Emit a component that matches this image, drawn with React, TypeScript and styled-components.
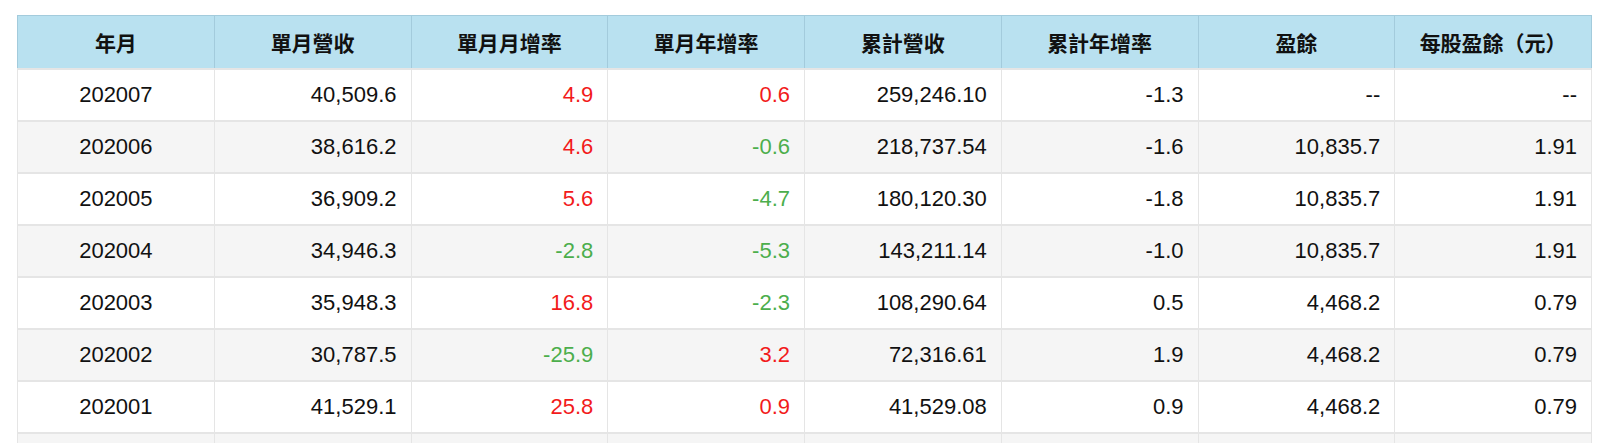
import React from 'react';
import styled, { createGlobalStyle } from 'styled-components';

const GlobalStyle = createGlobalStyle`
	body {
		margin: 0;
		background: #fff;
		font-family: 'Liberation Sans', Arial, 'Noto Sans CJK TC', sans-serif;
	}
`;

const Wrap = styled.div`
	padding: 15px 8px 0 17px;
`;

const Table = styled.table`
	width: 100%;
	border-collapse: collapse;
	table-layout: fixed;
	font-size: 22px;
	color: #111;
`;

const Th = styled.th`
	height: 52px;
	padding: 0 14px;
	background: #b9e1f0;
	border: 1px solid #a3cbdc;
	font-size: 21px;
	font-weight: bold;
	text-align: center;
	color: #111;
`;

const Row = styled.tr<{ $alt: boolean }>`
	background: ${(p) => (p.$alt ? '#f5f5f5' : '#fff')};
`;

type Tone = 'up' | 'down' | 'plain';

const Td = styled.td<{ $center?: boolean; $tone?: Tone }>`
	height: 50px;
	padding: 0 14px;
	border: 1px solid #e5e5e5;
	border-top: 2px solid #e5e5e5;
	text-align: ${(p) => (p.$center ? 'center' : 'right')};
	color: ${(p) => (p.$tone === 'up' ? '#f21b1b' : p.$tone === 'down' ? '#4cae4c' : '#111')};
	white-space: nowrap;
`;

const headers = ['年月', '單月營收', '單月月增率', '單月年增率', '累計營收', '累計年增率', '盈餘', '每股盈餘（元）'];

type Rec = [string, string, string, string, string, string, string, string];

const rows: Rec[] = [
	['202007', '40,509.6', '4.9', '0.6', '259,246.10', '-1.3', '--', '--'],
	['202006', '38,616.2', '4.6', '-0.6', '218,737.54', '-1.6', '10,835.7', '1.91'],
	['202005', '36,909.2', '5.6', '-4.7', '180,120.30', '-1.8', '10,835.7', '1.91'],
	['202004', '34,946.3', '-2.8', '-5.3', '143,211.14', '-1.0', '10,835.7', '1.91'],
	['202003', '35,948.3', '16.8', '-2.3', '108,290.64', '0.5', '4,468.2', '0.79'],
	['202002', '30,787.5', '-25.9', '3.2', '72,316.61', '1.9', '4,468.2', '0.79'],
	['202001', '41,529.1', '25.8', '0.9', '41,529.08', '0.9', '4,468.2', '0.79'],
];

const toneOf = (v: string): Tone => (v.startsWith('-') ? 'down' : 'up');

const App: React.FC = () => {
	return (
		<Wrap>
			<GlobalStyle />
			<Table>
				<thead>
					<tr>
						{headers.map((h) => (
							<Th key={h}>{h}</Th>
						))}
					</tr>
				</thead>
				<tbody>
					{rows.map((r, i) => (
						<Row key={r[0]} $alt={i % 2 === 1}>
							<Td $center>{r[0]}</Td>
							<Td>{r[1]}</Td>
							<Td $tone={toneOf(r[2])}>{r[2]}</Td>
							<Td $tone={toneOf(r[3])}>{r[3]}</Td>
							<Td>{r[4]}</Td>
							<Td>{r[5]}</Td>
							<Td>{r[6]}</Td>
							<Td>{r[7]}</Td>
						</Row>
					))}
					{/* next row, only its top shows in the frame */}
					<Row $alt>
						{headers.map((h) => (
							<Td key={h} />
						))}
					</Row>
				</tbody>
			</Table>
		</Wrap>
	);
};

export default App;
